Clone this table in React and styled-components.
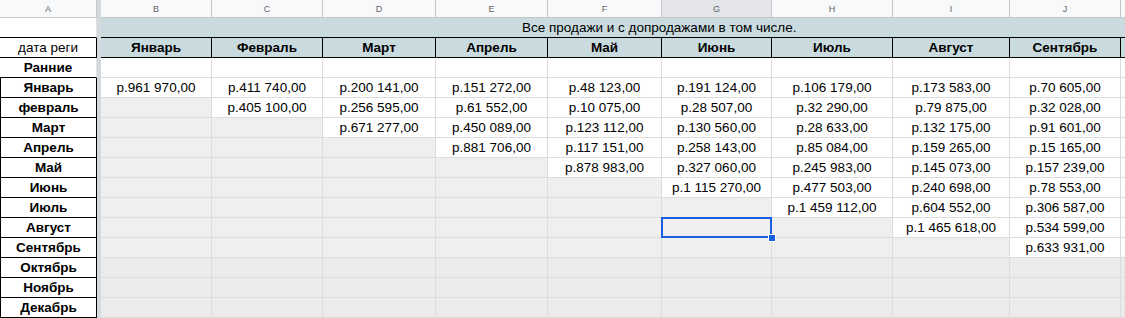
import React from 'react'
import styled, { createGlobalStyle } from 'styled-components'

const GlobalStyle = createGlobalStyle`
  html, body {
    margin: 0;
    padding: 0;
    background: #fff;
  }
  body {
    font-family: 'Liberation Sans', Arial, sans-serif;
    color: #000;
  }
`

const COLUMNS = [
  { key: 'B', width: 111, title: 'Январь' },
  { key: 'C', width: 111, title: 'Февраль' },
  { key: 'D', width: 113, title: 'Март' },
  { key: 'E', width: 112, title: 'Апрель' },
  { key: 'F', width: 114, title: 'Май' },
  { key: 'G', width: 110, title: 'Июнь' },
  { key: 'H', width: 121, title: 'Июль' },
  { key: 'I', width: 117, title: 'Август' },
  { key: 'J', width: 111, title: 'Сентябрь' },
  // only a sliver of column K is on screen
  { key: '', width: 8, title: '', extra: true },
]

// values per row, starting from column B
const ROWS = [
  { label: 'Ранние', plain: true, values: [] },
  {
    label: 'Январь',
    values: ['961 970,00', '411 740,00', '200 141,00', '151 272,00', '48 123,00', '191 124,00', '106 179,00', '173 583,00', '70 605,00'],
  },
  {
    label: 'февраль',
    values: [null, '405 100,00', '256 595,00', '61 552,00', '10 075,00', '28 507,00', '32 290,00', '79 875,00', '32 028,00'],
  },
  {
    label: 'Март',
    values: [null, null, '671 277,00', '450 089,00', '123 112,00', '130 560,00', '28 633,00', '132 175,00', '91 601,00'],
  },
  {
    label: 'Апрель',
    values: [null, null, null, '881 706,00', '117 151,00', '258 143,00', '85 084,00', '159 265,00', '15 165,00'],
  },
  {
    label: 'Май',
    values: [null, null, null, null, '878 983,00', '327 060,00', '245 983,00', '145 073,00', '157 239,00'],
  },
  {
    label: 'Июнь',
    values: [null, null, null, null, null, '1 115 270,00', '477 503,00', '240 698,00', '78 553,00'],
  },
  {
    label: 'Июль',
    values: [null, null, null, null, null, null, '1 459 112,00', '604 552,00', '306 587,00'],
  },
  {
    label: 'Август',
    values: [null, null, null, null, null, null, null, '1 465 618,00', '534 599,00'],
  },
  {
    label: 'Сентябрь',
    values: [null, null, null, null, null, null, null, null, '633 931,00'],
  },
  { label: 'Октябрь', late: true, values: [] },
  { label: 'Ноябрь', late: true, values: [] },
  { label: 'Декабрь', late: true, values: [] },
]

const SELECTED = { row: 'Август', col: 'G' }

function cellShade(row, col, value) {
  if (row.plain) return 'white'
  if (row.late) return 'late'
  if (col.extra || value) return 'white'
  return 'empty'
}

function App() {
  return (
    <>
      <GlobalStyle />
      <Sheet>
        <FrozenPane>
          <ColumnHeader>A</ColumnHeader>
          <LabelCell $edge="black-bottom" />
          <LabelCell $edge="box-top">дата реги</LabelCell>
          {ROWS.map(row => (
            <LabelCell
              key={row.label}
              $edge={row.plain ? 'black-bottom' : 'box'}
              $bold
            >
              {row.label}
            </LabelCell>
          ))}
        </FrozenPane>

        <FreezeBar />

        <ScrollPane
          $columns={COLUMNS.map(c => `${c.width}px`).join(' ')}
        >
          {COLUMNS.map((col, i) => (
            <ColumnHeader
              key={`h-${i}`}
              $active={col.key === SELECTED.col}
            >
              {col.key}
            </ColumnHeader>
          ))}

          <TitleCell>
            <TitleText>Все продажи и с допродажами в том числе.</TitleText>
          </TitleCell>

          {COLUMNS.map((col, i) => (
            <MonthCell key={`m-${i}`}>{col.title}</MonthCell>
          ))}

          {ROWS.map(row =>
            COLUMNS.map((col, i) => {
              const value = row.values[i]
              const selected =
                row.label === SELECTED.row && col.key === SELECTED.col
              return (
                <DataCell
                  key={`${row.label}-${i}`}
                  $shade={cellShade(row, col, value)}
                  $selected={selected}
                >
                  {value ? `р.${value}` : null}
                  {selected && (
                    <Selection>
                      <FillHandle />
                    </Selection>
                  )}
                </DataCell>
              )
            }),
          )}
        </ScrollPane>
      </Sheet>
    </>
  )
}

const Sheet = styled.div`
  display: flex;
  width: 1125px;
  height: 318px;
  overflow: hidden;
  background: #fff;
`

const FrozenPane = styled.div`
  display: grid;
  grid-template-columns: 97px;
  grid-template-rows: 18px;
  grid-auto-rows: 20px;
  flex: 0 0 97px;
`

const FreezeBar = styled.div`
  flex: 0 0 4px;
  background: #d4d9de;
`

const ScrollPane = styled.div`
  display: grid;
  grid-template-columns: ${props => props.$columns};
  grid-template-rows: 18px;
  grid-auto-rows: 20px;
  flex: 0 0 auto;
`

const ColumnHeader = styled.div`
  box-sizing: border-box;
  display: flex;
  align-items: center;
  justify-content: center;
  background: ${props => (props.$active ? '#e3e5e8' : '#f8f9fa')};
  border-right: 1px solid #c4c7c5;
  border-bottom: 1px solid #c4c7c5;
  font-size: 9px;
  color: #5f6368;
`

const LABEL_EDGES = {
  'black-bottom': `
    border-right: 1px solid #e2e2e2;
    border-bottom: 1px solid #000;
  `,
  'box-top': `
    border-right: 1px solid #000;
    border-bottom: 1px solid #000;
  `,
  box: `
    border-left: 1px solid #000;
    border-right: 1px solid #000;
    border-bottom: 1px solid #000;
  `,
}

const LabelCell = styled.div`
  box-sizing: border-box;
  display: flex;
  align-items: center;
  justify-content: center;
  white-space: nowrap;
  overflow: hidden;
  font-size: 13.5px;
  font-weight: ${props => (props.$bold ? 700 : 400)};
  ${props => LABEL_EDGES[props.$edge]}
`

const TEAL = '#c9dbde'

const TitleCell = styled.div`
  box-sizing: border-box;
  grid-column: 1 / -1;
  display: flex;
  align-items: center;
  padding-left: 421px;
  background: ${TEAL};
  border-bottom: 1px solid #000;
`

const TitleText = styled.span`
  font-size: 13.5px;
  white-space: nowrap;
`

const MonthCell = styled.div`
  box-sizing: border-box;
  display: flex;
  align-items: center;
  justify-content: center;
  background: ${TEAL};
  border-right: 1px solid #000;
  border-bottom: 1px solid #000;
  font-size: 13.5px;
  font-weight: 700;
  white-space: nowrap;
  overflow: hidden;
`

const SHADES = {
  white: '#fff',
  empty: '#efefef',
  late: '#ebebeb',
}

const DataCell = styled.div`
  box-sizing: border-box;
  position: relative;
  z-index: ${props => (props.$selected ? 2 : 'auto')};
  display: flex;
  align-items: center;
  justify-content: center;
  background: ${props => SHADES[props.$shade]};
  border-right: 1px solid #dcdcdc;
  border-bottom: 1px solid #dcdcdc;
  font-size: 13.5px;
  white-space: nowrap;
`

const Selection = styled.div`
  position: absolute;
  top: -1px;
  left: -1px;
  right: -1px;
  bottom: -1px;
  border: 2px solid #1a5fe0;
  pointer-events: none;
`

const FillHandle = styled.div`
  position: absolute;
  right: -5px;
  bottom: -5px;
  width: 6px;
  height: 6px;
  background: #1a5fe0;
  box-shadow: 0 0 0 1px #fff;
`

export default App
